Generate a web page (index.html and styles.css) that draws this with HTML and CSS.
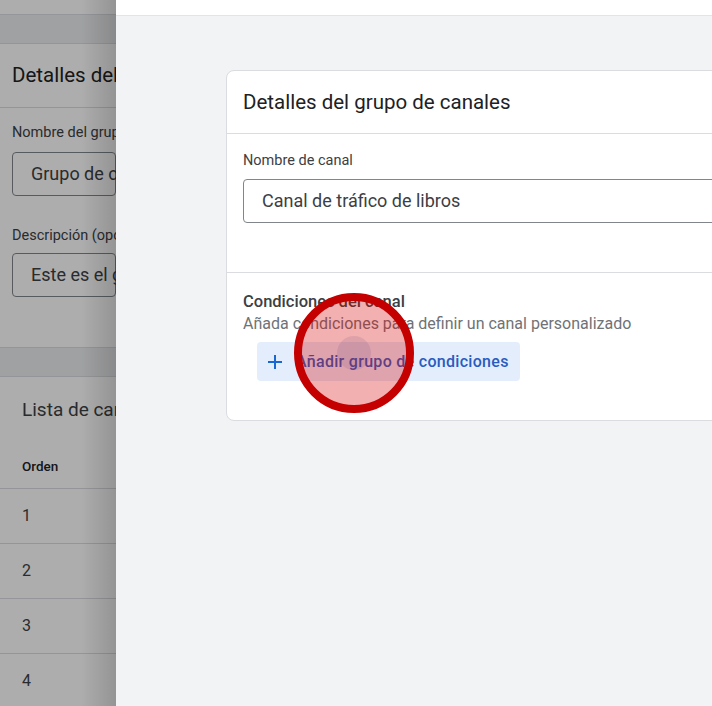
FILE: index.html
```html
<!DOCTYPE html>
<html lang="es">
<head>
    <meta charset="UTF-8">
    <meta name="viewport" content="width=device-width, initial-scale=1.0">
    <title>Grupo de canales</title>
    <link rel="stylesheet" href="styles.css">
</head>
<body>
    <div class="page">
        <div class="page-top"></div>
        <div class="page-band"></div>
        <div class="page-card">
            <div class="page-card-title">Detalles del grupo de canales</div>
            <div class="page-card-body">
                <div class="page-label">Nombre del grupo de canales</div>
                <div class="page-input">Grupo de canales personalizado</div>
                <div class="page-label second">Descripción (opcional)</div>
                <div class="page-input">Este es el grupo de canales</div>
            </div>
        </div>
        <div class="page-band"></div>
        <div class="page-card list">
            <div class="list-title">Lista de canales</div>
            <div class="list-head">Orden</div>
            <div class="list-row">1</div>
            <div class="list-row">2</div>
            <div class="list-row">3</div>
            <div class="list-row">4</div>
        </div>
        <div class="scrim"></div>
    </div>

    <div class="panel">
        <div class="panel-top"></div>
        <div class="panel-content">
            <div class="card">
                <div class="card-title">Detalles del grupo de canales</div>
                <div class="card-section">
                    <div class="field-label">Nombre de canal</div>
                    <div class="field-input">Canal de tráfico de libros</div>
                </div>
                <div class="card-section conditions">
                    <div class="cond-title">Condiciones del canal</div>
                    <div class="cond-sub">Añada condiciones para definir un canal personalizado</div>
                    <button class="add-button">
                        <svg width="14" height="14" viewBox="0 0 14 14"><path d="M7 0v14M0 7h14" stroke="#1967d2" stroke-width="2"/></svg>
                        <span>Añadir grupo de condiciones</span>
                        <span class="click-marker"><span class="ripple"></span></span>
                    </button>
                </div>
            </div>
        </div>
    </div>
</body>
</html>
```

FILE: styles.css
```css
body {
    font-family: Roboto, "Noto Sans", Arial, sans-serif;
    margin: 0;
    height: 706px;
    display: flex;
    overflow: hidden;
    color: #202124;
}
.page {
    width: 116px;
    flex-shrink: 0;
    position: relative;
    overflow: hidden;
    white-space: nowrap;
    background-color: #f1f3f4;
}
.page-top {
    height: 14px;
    background-color: white;
    border-bottom: 1px solid #dadce0;
}
.page-band {
    height: 28px;
    background-color: #ecedef;
}
.page-card {
    background-color: white;
    border-top: 1px solid #dadce0;
    border-bottom: 1px solid #dadce0;
}
.page-card-title {
    font-size: 20.5px;
    height: 63px;
    line-height: 63px;
    padding-left: 12px;
    border-bottom: 1px solid #dadce0;
}
.page-card-body {
    padding: 15px 0 50px 12px;
}
.page-label {
    font-size: 14.5px;
    color: #3c4043;
    height: 20px;
    line-height: 20px;
}
.page-label.second {
    margin-top: 30px;
}
.page-input {
    border: 1px solid #80868b;
    border-radius: 4px;
    height: 42px;
    line-height: 42px;
    padding-left: 18px;
    font-size: 18px;
    color: #3c4043;
    margin-top: 9px;
}
.page-label.second + .page-input {
    margin-top: 7px;
}
.list-title {
    font-size: 19px;
    line-height: 22px;
    padding: 22px 22px 0;
    height: 34px;
    color: #3c4043;
}
.list-head {
    font-size: 13.5px;
    font-weight: 500;
    height: 43px;
    line-height: 43px;
    padding: 12px 0 0 22px;
    border-bottom: 1px solid #dadce0;
}
.list-row {
    height: 54px;
    line-height: 54px;
    padding-left: 22px;
    font-size: 16px;
    color: #3c4043;
    border-bottom: 1px solid #dadce0;
}
.scrim {
    position: absolute;
    top: 0;
    left: 0;
    right: 0;
    bottom: 0;
    background: linear-gradient(to right, rgba(0, 0, 0, 0.32) 70%, rgba(0, 0, 0, 0.42));
}
.panel {
    flex: 1;
    display: flex;
    flex-direction: column;
    background-color: #f1f3f4;
}
.panel-top {
    height: 15px;
    background-color: white;
    border-bottom: 1px solid #e3e4e6;
    flex-shrink: 0;
}
.panel-content {
    padding: 54px 0 0 110px;
}
.card {
    width: 600px;
    background-color: white;
    border: 1px solid #dadce0;
    border-radius: 8px;
}
.card-title {
    height: 62px;
    line-height: 62px;
    font-size: 20.5px;
    padding-left: 16px;
    border-bottom: 1px solid #dadce0;
}
.card-section {
    padding: 18px 0 0 16px;
    height: 139px;
    box-sizing: border-box;
    border-bottom: 1px solid #dadce0;
}
.field-label {
    font-size: 14.5px;
    color: #3c4043;
    height: 18px;
    line-height: 18px;
}
.field-input {
    border: 1px solid #80868b;
    border-radius: 4px;
    height: 42px;
    line-height: 42px;
    padding-left: 18px;
    margin-top: 9px;
    font-size: 18px;
    color: #3c4043;
}
.card-section.conditions {
    height: auto;
    padding: 18px 0 39px 16px;
    border-bottom: none;
}
.cond-title {
    font-size: 16.5px;
    font-weight: 500;
    height: 22px;
    line-height: 22px;
    color: #3c4043;
}
.cond-sub {
    font-size: 16px;
    color: #6f7276;
    height: 22px;
    line-height: 22px;
}
.add-button {
    position: relative;
    display: flex;
    align-items: center;
    gap: 14px;
    margin: 7px 0 0 14px;
    height: 39px;
    padding: 0 11px 0 11px;
    border: none;
    border-radius: 4px;
    background-color: #e3edfc;
    color: #2a5cbf;
    font-family: Roboto, "Noto Sans", Arial, sans-serif;
    font-size: 16px;
    font-weight: 500;
    letter-spacing: 0.3px;
    cursor: pointer;
}
.click-marker {
    position: absolute;
    left: 37px;
    top: -49px;
    width: 120px;
    height: 120px;
    box-sizing: border-box;
    border: 8px solid #c40000;
    border-radius: 50%;
    background-color: rgba(215, 0, 0, 0.31);
    display: flex;
    justify-content: center;
    align-items: center;
}
.ripple {
    width: 34px;
    height: 34px;
    border-radius: 50%;
    background-color: rgba(80, 60, 120, 0.12);
}
```
